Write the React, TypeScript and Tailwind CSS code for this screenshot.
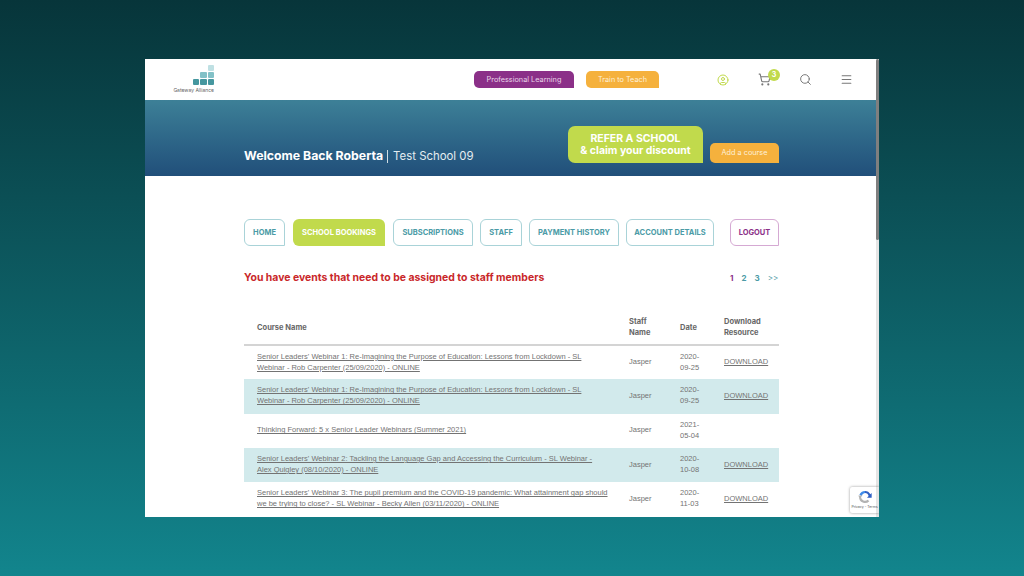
import { Search, Menu, ShoppingCart, CircleUser } from "lucide-react";

const font = { sans: "font-['Inter','Liberation_Sans',sans-serif]" };

const tabs = [
  { label: "HOME", w: "w-[41px] mr-px" },
  { label: "SCHOOL BOOKINGS", w: "w-[92px] mr-px" },
  { label: "SUBSCRIPTIONS", w: "w-[80px]" },
  { label: "STAFF", w: "w-[42px]" },
  { label: "PAYMENT HISTORY", w: "w-[90px]" },
  { label: "ACCOUNT DETAILS", w: "w-[88px]" },
];

const rows = [
  { name: "Senior Leaders' Webinar 1: Re-Imagining the Purpose of Education: Lessons from Lockdown - SL Webinar - Rob Carpenter (25/09/2020) - ONLINE", date: "2020-09-25", dl: true },
  { name: "Senior Leaders' Webinar 1: Re-Imagining the Purpose of Education: Lessons from Lockdown - SL Webinar - Rob Carpenter (25/09/2020) - ONLINE", date: "2020-09-25", dl: true, tint: true },
  { name: "Thinking Forward: 5 x Senior Leader Webinars (Summer 2021)", date: "2021-05-04", dl: false },
  { name: "Senior Leaders' Webinar 2: Tackling the Language Gap and Accessing the Curriculum - SL Webinar - Alex Quigley (08/10/2020) - ONLINE", date: "2020-10-08", dl: true, tint: true },
  { name: "Senior Leaders' Webinar 3: The pupil premium and the COVID-19 pandemic: What attainment gap should we be trying to close? - SL Webinar - Becky Allen (03/11/2020) - ONLINE", date: "2020-11-03", dl: true },
];

function Logo() {
  return (
    <div className="flex w-[40px] flex-col items-end">
      <div className="flex flex-col items-end gap-px">
        <div className="h-[6px] w-[6.300px] rounded-[1px] bg-[#bfe0e3]" />
        <div className="flex gap-px">
          <div className="h-[6px] w-[6.300px] rounded-[1px] bg-[#82c1c7]" />
          <div className="h-[6px] w-[6.300px] rounded-[1px] bg-[#82c1c7]" />
        </div>
        <div className="flex gap-px">
          <div className="h-[6px] w-[6.300px] rounded-[1px] bg-[#45979f]" />
          <div className="h-[6px] w-[6.300px] rounded-[1px] bg-[#45979f]" />
          <div className="h-[6px] w-[6.300px] rounded-[1px] bg-[#45979f]" />
        </div>
      </div>
      <div className="mt-[2px] whitespace-nowrap text-[5px] leading-[7px] text-[#666]">Gateway Alliance</div>
    </div>
  );
}

function Recaptcha() {
  return (
    <div className="absolute bottom-[4px] right-0 flex h-[26px] w-[29px] flex-col items-center rounded-l-[2px] bg-white pt-[2px] shadow-[0_0_3px_rgba(0,0,0,0.4)]">
      <svg viewBox="0 0 24 24" className="h-[16px] w-[16px]" fill="none">
        <path d="M12 3a9 9 0 0 1 8 5l2-2v7h-7l2.400-2.400A6 6 0 0 0 12 6z" fill="#2f5fc4" />
        <path d="M12 3a9 9 0 0 0-8.400 5.800L7 10.600A6 6 0 0 1 12 6z" fill="#3f8be8" />
        <path d="M3 12a9 9 0 0 0 15.500 6.200L16 16a6 6 0 0 1-10-4l2.300-2.300H2z" fill="#b3b3b3" />
      </svg>
      <div className="whitespace-nowrap text-[3.500px] leading-[5px] text-[#555]">Privacy - Terms</div>
    </div>
  );
}

export default function App() {
  return (
    <div className={`h-[576px] w-[1024px] overflow-hidden bg-gradient-to-b from-[#07353a] to-[#12858d] pl-[145px] pt-[59px] ${font.sans}`}>
      <div className="relative h-[458px] w-[734px] overflow-hidden bg-white">
        <header className="flex h-[41px] items-center pl-[29px]">
          <Logo />
          <button className="ml-[260px] h-[17px] w-[100px] rounded-[5px] rounded-br-none bg-[#8b3088] pt-px text-[7.300px] text-[#e8d5e8]">Professional Learning</button>
          <button className="ml-[12px] h-[17px] w-[73px] rounded-[5px] rounded-br-none bg-[#f5b13d] pt-px text-[7.300px] text-[#fdf0d8]">Train to Teach</button>
          <CircleUser className="ml-[58px] h-[12px] w-[12px] text-[#c1da4c]" strokeWidth={2} />
          <div className="relative ml-[29px] h-[13px] w-[13px]">
            <ShoppingCart className="h-[13px] w-[13px] text-[#777]" strokeWidth={2} />
            <span className="absolute -right-[9px] -top-[4px] flex h-[12px] w-[12px] items-center justify-center rounded-full bg-[#c1da4c] text-[7px] font-bold text-white">3</span>
          </div>
          <Search className="ml-[28px] h-[13px] w-[13px] text-[#777]" strokeWidth={1.8} />
          <Menu className="ml-[28px] h-[13px] w-[13px] text-[#777]" strokeWidth={2} />
        </header>

        <section className="flex h-[76px] items-end bg-gradient-to-b from-[#3d8097] to-[#214f7a] pl-[99px] pr-[100px]">
          <div className="mb-[12px] flex items-center leading-[16px] text-white">
            <span className="text-[12.300px] font-bold">Welcome Back Roberta</span>
            <span className="ml-[4px] mr-[5px] h-[13px] w-px bg-[#cfdde4]" />
            <span className="text-[11.400px] text-[#e4edf1]">Test School 09</span>
          </div>
          <div className="ml-auto flex items-end gap-[7px] pb-[13px]">
            <button className="h-[37px] w-[135px] rounded-[7px] rounded-br-none bg-[#c1da4c] pt-px text-[10.500px] font-bold leading-[12.500px] text-white">
              REFER A SCHOOL
              <br />
              &amp; claim your discount
            </button>
            <button className="h-[20px] w-[69px] rounded-[5px] rounded-br-none bg-[#f5b13d] pt-px text-[7.300px] text-[#fdf0d8]">Add a course</button>
          </div>
        </section>

        <main className="px-[99px] pr-[100px] pt-[43px]">
          <nav className="flex h-[27px]">
            <div className="flex gap-[7px]">
              {tabs.map((t) => (
                <a
                  key={t.label}
                  className={`flex items-center justify-center rounded-[6px] rounded-br-none text-[7.500px] font-bold whitespace-nowrap ${t.w} ${
                    t.label === "SCHOOL BOOKINGS" ? "bg-[#c1da4c] text-white" : "border border-[#a9d3d8] text-[#4b9ba6]"
                  }`}
                >
                  {t.label}
                </a>
              ))}
            </div>
            <a className="ml-auto flex w-[49px] items-center justify-center rounded-[6px] rounded-br-none border border-[#d5a9d3] text-[7.500px] font-bold text-[#8b3088]">LOGOUT</a>
          </nav>

          <div className="mt-[24px] flex h-[16px] items-center justify-between">
            <h2 className="text-[10.450px] font-bold text-[#c9272a]">You have events that need to be assigned to staff members</h2>
            <div className="flex w-[49px] items-center gap-[8px] text-[8px] font-bold text-[#4b9ba6]">
              <span className="text-[#8b3088]">1</span>
              <span>2</span>
              <span>3</span>
              <span className="font-normal">&gt;&gt;</span>
            </div>
          </div>

          <table className="mt-[29px] w-[535px] table-fixed border-collapse font-['Liberation_Sans',sans-serif] text-[7.500px] leading-[11px] text-[#727272] opacity-[0.99]">
            <thead>
              <tr className="h-[30px] border-b-2 border-[#d4d4d4] text-left font-['Inter',sans-serif] text-[7.500px] font-bold text-[#666]">
                <th className="w-[385px] pb-[5px] pl-[13px]">Course Name</th>
                <th className="w-[51px] pb-[5px]">Staff<br />Name</th>
                <th className="w-[44px] pb-[5px]">Date</th>
                <th className="pb-[5px]">Download<br />Resource</th>
              </tr>
            </thead>
            <tbody>
              {rows.map((r, i) => (
                <tr key={i} className={`h-[34.300px] ${r.tint ? "bg-[#d2eaec]" : ""}`}>
                  <td className="pb-[2px] pl-[13px] pr-[21px]"><a className="underline">{r.name}</a></td>
                  <td className="pb-[2px]">Jasper</td>
                  <td className="pb-[2px] pr-[20px]">{r.date}</td>
                  <td className="pb-[2px]">{r.dl && <a className="underline">DOWNLOAD</a>}</td>
                </tr>
              ))}
            </tbody>
          </table>
        </main>

        <Recaptcha />
        <div className="absolute right-0 top-0 h-full w-[3px] bg-black/10">
          <div className="h-[181px] w-full rounded-full bg-[#7f7f7f]" />
        </div>
      </div>
    </div>
  );
}
